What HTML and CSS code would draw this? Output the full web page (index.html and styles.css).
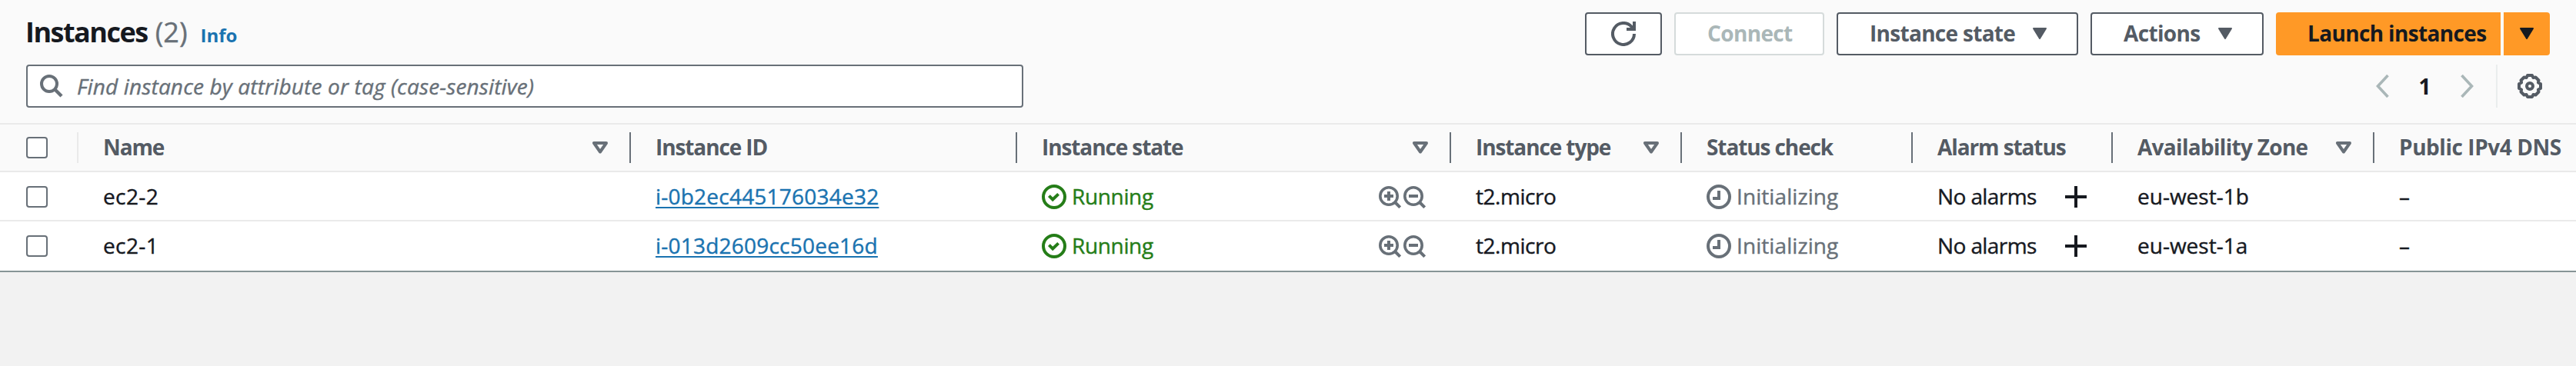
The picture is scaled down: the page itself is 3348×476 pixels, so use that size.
FILE: index.html
```html
<!DOCTYPE html>
<html lang="en">
<head>
    <meta charset="UTF-8">
    <meta name="viewport" content="width=device-width, initial-scale=1.0">
    <title>Instances</title>
    <link rel="stylesheet" href="styles.css">
</head>
<body>
    <!-- Shared icons -->
    <svg class="sprite" width="0" height="0">
        <symbol id="caret" viewBox="0 0 20 16">
            <path d="M2 1h16L10 14z" fill="currentColor" stroke="currentColor" stroke-width="2" stroke-linejoin="round"/>
        </symbol>
        <symbol id="sort" viewBox="0 0 20 16">
            <path d="M2 2h16L10 13.5z" fill="none" stroke="currentColor" stroke-width="4" stroke-linejoin="round"/>
        </symbol>
        <symbol id="check" viewBox="0 0 32 32">
            <circle cx="16" cy="16" r="14" fill="none" stroke="currentColor" stroke-width="4"/>
            <path d="M9.400 14.600l4.800 4.800 7.400-7" fill="none" stroke="currentColor" stroke-width="4"/>
        </symbol>
        <symbol id="clock" viewBox="0 0 32 32">
            <circle cx="16" cy="16" r="14" fill="none" stroke="currentColor" stroke-width="4"/>
            <path d="M16 8v10H8" fill="none" stroke="currentColor" stroke-width="4"/>
        </symbol>
        <symbol id="zoom-in" viewBox="0 0 29 29">
            <circle cx="13" cy="13" r="11.2" fill="none" stroke="currentColor" stroke-width="3.6"/>
            <path d="M20.5 20.5l7.2 7.2M13 7v12M7 13h12" fill="none" stroke="currentColor" stroke-width="4"/>
        </symbol>
        <symbol id="zoom-out" viewBox="0 0 29 29">
            <circle cx="13" cy="13" r="11.2" fill="none" stroke="currentColor" stroke-width="3.6"/>
            <path d="M20.5 20.5l7.2 7.2M7 13h12" fill="none" stroke="currentColor" stroke-width="4"/>
        </symbol>
        <symbol id="plus" viewBox="0 0 28 28">
            <path d="M14 0v28M0 14h28" fill="none" stroke="currentColor" stroke-width="4"/>
        </symbol>
    </svg>

    <div class="panel">
        <div class="header">
            <h2>Instances</h2>
            <span class="count">(2)</span>
            <a class="info">Info</a>
            <div class="actions">
                <button class="btn btn-refresh">
                    <svg width="32" height="32" viewBox="0 0 32 32">
                        <path d="M30 16a14 14 0 1 1-3.5-9.3L30 10M30 0v10H20" fill="none" stroke="currentColor" stroke-width="4"/>
                    </svg>
                </button>
                <button class="btn btn-connect" disabled>Connect</button>
                <button class="btn btn-state">Instance state <svg class="caret"><use href="#caret"/></svg></button>
                <button class="btn btn-actions">Actions <svg class="caret"><use href="#caret"/></svg></button>
                <div class="launch">
                    <button class="btn btn-primary btn-launch">Launch instances</button>
                    <button class="btn btn-primary btn-more"><svg class="caret"><use href="#caret"/></svg></button>
                </div>
            </div>
        </div>

        <div class="toolbar">
            <div class="search">
                <svg width="30" height="30" viewBox="0 0 30 30">
                    <circle cx="12" cy="12" r="10" fill="none" stroke="currentColor" stroke-width="4"/>
                    <path d="M19 19l9 9" stroke="currentColor" stroke-width="4.4"/>
                </svg>
                <span>Find instance by attribute or tag (case-sensitive)</span>
            </div>
            <div class="pagination">
                <svg width="17" height="30" viewBox="0 0 17 30"><path d="M15.5 1L2.5 15l13 14" fill="none" stroke="currentColor" stroke-width="3.6"/></svg>
                <span class="page">1</span>
                <svg width="17" height="30" viewBox="0 0 17 30"><path d="M1.5 1l13 14-13 14" fill="none" stroke="currentColor" stroke-width="3.6"/></svg>
            </div>
            <div class="settings">
                <svg width="32" height="32" viewBox="0 0 32 32" fill="none" stroke="currentColor" stroke-width="4">
                    <polygon stroke-linejoin="round" points="30,19 26.9,20.5 27.5,23.5 23.5,27.5 20.5,26.9 19,30 13,30 11.5,26.9 8.5,27.5 4.5,23.5 5.1,20.5 2,19 2,13 5.1,11.5 4.5,8.5 8.5,4.5 11.5,5.1 13,2 19,2 20.5,5.1 23.5,4.5 27.5,8.5 26.9,11.5 30,13"/>
                    <circle cx="16" cy="16" r="4"/>
                </svg>
            </div>
        </div>

        <div class="table">
            <div class="row head">
                <div class="cell select"><span class="checkbox"></span></div>
                <div class="cell">Name <svg class="caret"><use href="#sort"/></svg></div>
                <div class="cell">Instance ID</div>
                <div class="cell">Instance state <svg class="caret"><use href="#sort"/></svg></div>
                <div class="cell">Instance type <svg class="caret"><use href="#sort"/></svg></div>
                <div class="cell">Status check</div>
                <div class="cell">Alarm status</div>
                <div class="cell zone">Availability Zone <svg class="caret"><use href="#sort"/></svg></div>
                <div class="cell dns">Public IPv4 DNS</div>
            </div>
            <div class="row">
                <div class="cell select"><span class="checkbox"></span></div>
                <div class="cell name">ec2-2</div>
                <div class="cell"><a class="link">i-0b2ec445176034e32</a></div>
                <div class="cell state">
                    <svg class="status-icon"><use href="#check"/></svg>Running
                    <span class="filters"><svg><use href="#zoom-in"/></svg><svg><use href="#zoom-out"/></svg></span>
                </div>
                <div class="cell type">t2.micro</div>
                <div class="cell status"><svg class="status-icon"><use href="#clock"/></svg>Initializing</div>
                <div class="cell alarm">No alarms <svg class="plus"><use href="#plus"/></svg></div>
                <div class="cell">eu-west-1b</div>
                <div class="cell">–</div>
            </div>
            <div class="row">
                <div class="cell select"><span class="checkbox"></span></div>
                <div class="cell name">ec2-1</div>
                <div class="cell"><a class="link">i-013d2609cc50ee16d</a></div>
                <div class="cell state">
                    <svg class="status-icon"><use href="#check"/></svg>Running
                    <span class="filters"><svg><use href="#zoom-in"/></svg><svg><use href="#zoom-out"/></svg></span>
                </div>
                <div class="cell type">t2.micro</div>
                <div class="cell status"><svg class="status-icon"><use href="#clock"/></svg>Initializing</div>
                <div class="cell alarm">No alarms <svg class="plus"><use href="#plus"/></svg></div>
                <div class="cell">eu-west-1a</div>
                <div class="cell">–</div>
            </div>
        </div>
    </div>
</body>
</html>
```
FILE: styles.css
```css
* {
    margin: 0;
    padding: 0;
    box-sizing: border-box;
}

body {
    background-color: #f2f2f2;
    font-family: "Open Sans", "Noto Sans", sans-serif;
    font-size: 28px;
    color: #16191f;
    overflow: hidden;
}

.sprite {
    position: absolute;
}

svg {
    display: block;
    flex-shrink: 0;
}

.panel {
    background-color: #fafafa;
    border-bottom: 2px solid #879596;
    box-shadow: 0 1px 1px #d5dbdb; /* soft edge under the panel */
}

/* Title row */
.header {
    display: flex;
    align-items: baseline;
    height: 84px;
    padding: 16px 34px 0 33px;
}

h2 {
    font-size: 36px;
    line-height: 52px;
    letter-spacing: -1.5px;
}

.count {
    margin-left: 10px;
    font-size: 36px;
    color: #687078;
}

.info {
    margin-left: 17px;
    font-size: 24px;
    font-weight: bold;
    color: #1a73b0;
}

.actions {
    display: flex;
    align-self: flex-start;
    gap: 16px;
    margin-left: auto;
}

.btn {
    display: flex;
    align-items: center;
    height: 56px;
    padding: 0 0 2px 41px;
    border: 2px solid #545b64;
    border-radius: 4px;
    background-color: white;
    font-family: inherit;
    font-size: 28px;
    font-weight: bold;
    letter-spacing: -0.65px;
    white-space: nowrap;
    color: #545b64;
}

/* icons sit 1px lower than the text */
.btn svg,
.cell svg,
.checkbox {
    margin-top: 2px;
}

.btn:disabled {
    border-color: #d5dbdb;
    color: #aab7b8;
}

.btn .caret {
    margin-left: auto;
}

.btn-refresh {
    width: 100px;
    padding-left: 32px;
}

.btn-connect {
    width: 195px;
}

.btn-state {
    width: 314px;
    letter-spacing: -0.7px;
}

.btn-state,
.btn-actions {
    padding-right: 38px;
}

.btn-actions {
    width: 225px;
}

.launch {
    display: flex;
    gap: 4px;
}

.btn-primary {
    border: none;
    background-color: #ff9926;
    color: #16191f;
}

.btn-launch {
    width: 292px;
    border-radius: 4px 0 0 4px;
}

.btn-more {
    width: 60px;
    padding: 0 20px 2px;
    border-radius: 0 4px 4px 0;
}

.caret {
    width: 20px;
    height: 16px;
}

/* Search and pagination */
.toolbar {
    display: flex;
    height: 76px;
    padding: 0 34px;
}

.search {
    display: flex;
    align-items: center;
    width: 1296px;
    height: 56px;
    padding-left: 16px;
    border: 2px solid #687078;
    border-radius: 4px;
    background-color: white;
    font-style: italic;
    letter-spacing: 0.15px;
    color: #687078;
}

.search span {
    margin-left: 18px;
}

/* slightly heavier regular text */
.search span,
.count,
.row:not(.head) {
    -webkit-text-stroke: 0.4px currentColor;
}

.pagination {
    display: flex;
    align-items: center;
    height: 56px;
    margin-left: auto;
    color: #aab7b8;
}

.page {
    width: 93px;
    font-weight: bold;
    text-align: center;
    color: #16191f;
}

.settings {
    display: flex;
    align-items: center;
    height: 56px;
    margin-left: 29px;
    padding: 0 10px 0 26px;
    border-left: 2px solid #eaeded;
    color: #545b64;
}

/* Instance table */
.row {
    display: grid;
    grid-template-columns: 102px 718px 502px 564px 300px 300px 260px 340px 262px;
    height: 64px;
    border-bottom: 2px solid #eaeaea;
    background-color: white;
}

.row:last-child {
    border-bottom: none;
    padding-bottom: 2px;
}

.head {
    align-items: center;
    border-top: 2px solid #eaeaea;
    background-color: #fafafa;
    font-weight: bold;
    letter-spacing: -1.1px;
    color: #545b64;
}

.cell {
    display: flex;
    align-items: center;
    padding-left: 32px;
    white-space: nowrap;
}

.head .cell {
    height: 40px;
    padding-right: 28px;
    padding-bottom: 2px;
    border-right: 2px solid #687078;
}

.head .cell:last-child {
    border-right: none;
}

.head .select {
    border-color: #eaeaea;
}

.head .caret {
    margin-left: auto;
    color: #687078;
}

.head .zone {
    letter-spacing: -0.7px;
}

.head .dns {
    padding-right: 0;
    letter-spacing: -0.45px;
}

.cell.select {
    padding-left: 34px;
}

.head .select {
    padding-right: 0;
}

.checkbox {
    width: 28px;
    height: 28px;
    border: 2px solid #687078;
    border-radius: 4px;
    background-color: white;
}

.name {
    letter-spacing: 0.4px;
}

.link {
    color: #1a73b0;
    letter-spacing: 0.22px;
    text-decoration: underline;
    text-decoration-thickness: 2px;
    text-underline-offset: 3px;
}

.status-icon {
    width: 32px;
    height: 32px;
    margin-right: 7px;
}

.state {
    padding-right: 33px;
    letter-spacing: -0.35px;
    color: #257d18;
}

.filters {
    display: flex;
    gap: 3px;
    margin-left: auto;
    color: #687078;
}

.filters svg {
    width: 29px;
    height: 29px;
}

.type {
    letter-spacing: -0.45px;
}

.status {
    letter-spacing: 0.08px;
    color: #687078;
}

.alarm {
    padding-right: 34px;
    letter-spacing: -0.6px;
}

.plus {
    width: 28px;
    height: 28px;
    margin-left: auto;
}
```
